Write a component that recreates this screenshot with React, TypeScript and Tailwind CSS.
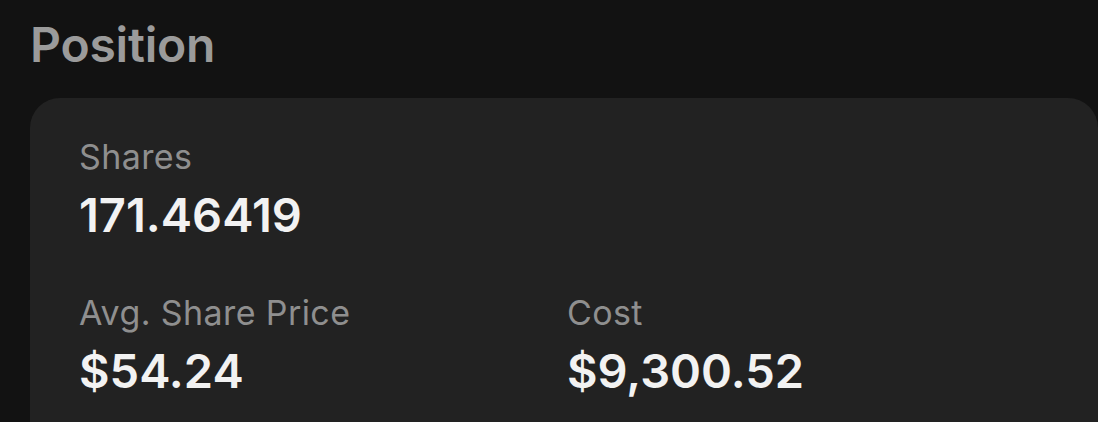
import React from 'react';

function Stat({ label, value }: { label: string; value: string }) {
  return (
    <div className="flex flex-col">
      <span className="text-[34px] leading-[40px] tracking-[0.4px] text-[#8f8f8f]">{label}</span>
      <span className="mt-[10px] text-[47px] font-semibold leading-[56px] text-[#f2f2f2]">
        {value}
      </span>
    </div>
  );
}

export default function App() {
  return (
    <div
      className="h-[422px] w-[1098px] overflow-hidden bg-[#121212]"
      style={{ fontFamily: 'Inter, "Noto Sans", sans-serif' }}
    >
      <h2 className="pl-[30px] pt-[16px] text-[48px] font-semibold leading-[58px] tracking-[-0.2px] text-[#9b9b9b]">
        Position
      </h2>
      <section className="mt-[24px] ml-[30px] h-[400px] rounded-[30px] bg-[#222222] pl-[49px] pt-[39px]">
        <Stat label="Shares" value="171.46419" />
        <div className="mt-[50px] grid grid-cols-[488px_1fr]">
          <Stat label="Avg. Share Price" value="$54.24" />
          <Stat label="Cost" value="$9,300.52" />
        </div>
      </section>
    </div>
  );
}
